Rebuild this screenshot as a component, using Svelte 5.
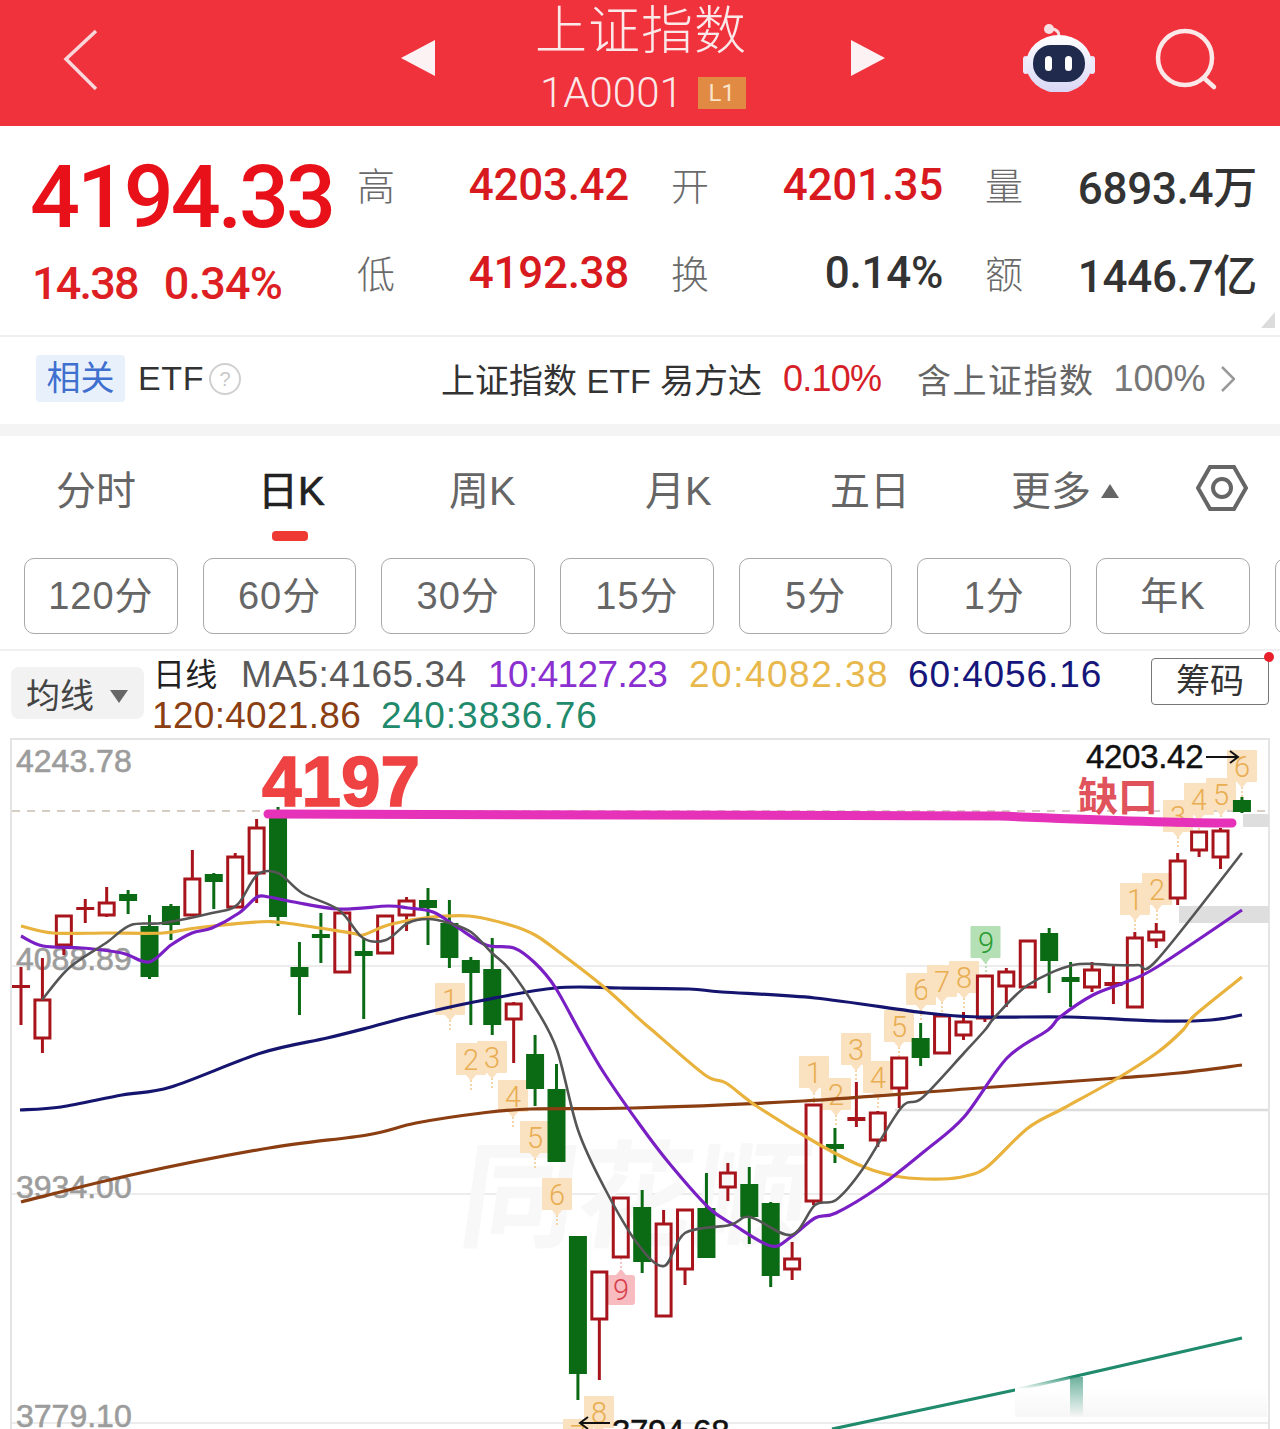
<script>
  const step = 21.42;
  const cx = (i) => 21 + step * i;

  // [up, wickTop, bodyTop, bodyBottom, wickBottom]
  const candles = [
    [1, 967, 985, 988, 1025], [1, 958, 1000, 1038, 1053], [1, 916, 916, 945, 955], [1, 899, 907, 910, 923],
    [1, 887, 903, 915, 917], [0, 890, 894, 901, 914], [0, 915, 926, 977, 979], [0, 904, 906, 925, 940],
    [1, 850, 879, 915, 915], [0, 873, 874, 882, 909], [1, 853, 857, 907, 907], [1, 819, 828, 873, 903],
    [0, 807, 815, 917, 926], [0, 942, 967, 977, 1015], [0, 913, 934, 938, 963], [1, 913, 913, 972, 972],
    [0, 938, 951, 956, 1019], [1, 916, 916, 953, 953], [1, 897, 901, 915, 931], [0, 888, 900, 908, 945],
    [0, 900, 923, 958, 968], [0, 957, 960, 973, 1025], [0, 938, 969, 1025, 1035], [1, 1002, 1004, 1019, 1063],
    [0, 1035, 1054, 1089, 1106], [0, 1064, 1089, 1162, 1162], [0, 1236, 1236, 1374, 1400], [1, 1272, 1272, 1319, 1380],
    [1, 1198, 1198, 1257, 1257], [0, 1190, 1207, 1262, 1273], [1, 1210, 1224, 1316, 1316], [1, 1210, 1210, 1269, 1285],
    [0, 1173, 1208, 1258, 1258], [1, 1163, 1173, 1187, 1201], [0, 1167, 1184, 1217, 1244], [0, 1202, 1203, 1276, 1287],
    [1, 1242, 1259, 1269, 1280], [1, 1105, 1105, 1201, 1205], [0, 1128, 1144, 1149, 1163], [1, 1082, 1117, 1121, 1127],
    [1, 1111, 1113, 1140, 1147], [1, 1058, 1058, 1088, 1108], [0, 1023, 1038, 1058, 1066], [1, 1016, 1016, 1053, 1053],
    [1, 1012, 1022, 1035, 1040], [1, 976, 976, 1018, 1022], [1, 968, 972, 986, 1007], [1, 941, 941, 987, 987],
    [0, 928, 933, 961, 993], [0, 962, 977, 982, 1007], [1, 962, 970, 987, 992], [1, 965, 982, 986, 1004],
    [1, 932, 938, 1007, 1007], [1, 923, 932, 940, 948], [1, 853, 861, 898, 905], [1, 832, 832, 850, 857],
    [1, 828, 831, 857, 869], [0, 797, 800, 812, 813]
  ];

  const ma5 = '42,1000 69,968 106,943 131,925 163,923 212,913 237,905 257,875 278,873 302,893 339,910 363,938 386,940 408,923 428,919 449,923 471,932 492,953 510,970 535,1007 557,1050 578,1130 604,1187 637,1243 664,1266 685,1233 730,1225 750,1217 791,1235 815,1205 836,1200 862,1170 901,1108 922,1098 964,1053 985,1030 995,1017 1028,985 1073,965 1113,965 1138,965 1157,960 1242,853';
  const ma10 = '21,936 43,946 82,948 122,953 149,962 171,945 192,933 212,928 239,913 257,897 269,897 294,902 339,909 388,906 408,908 433,912 457,927 486,945 514,948 535,963 555,987 580,1032 604,1073 640,1125 669,1163 709,1208 734,1225 771,1246 791,1237 815,1218 836,1213 879,1187 926,1150 964,1117 1007,1058 1048,1030 1060,1017 1093,995 1126,982 1157,967 1242,910';
  const ma20 = '21,926 53,933 106,933 163,933 196,928 257,922 286,923 351,933 363,935 388,925 424,918 469,916 510,925 535,935 559,952 604,987 637,1017 652,1030 705,1075 726,1083 758,1107 820,1145 864,1167 901,1177 942,1179 966,1176 987,1167 1028,1128 1064,1108 1118,1078 1158,1052 1183,1030 1195,1015 1242,977';
  const ma60 = '20,1110 61,1107 122,1095 171,1087 261,1053 327,1038 367,1028 408,1017 469,1003 555,988 620,988 689,989 722,992 815,998 926,1013 979,1017 1069,1017 1158,1021 1211,1020 1242,1015';
  const ma120 = '21,1202 131,1175 269,1148 367,1135 416,1123 482,1113 531,1109 633,1108 803,1101 966,1089 1118,1078 1179,1073 1242,1065';
  const ma240 = '832,1429 1015,1390 1242,1338';

  // catmull-rom through the sampled points, the chart's lines are not polygonal
  function smooth(str) {
    const p = str.split(' ').map((s) => s.split(',').map(Number));
    let d = `M${p[0][0]} ${p[0][1]}`;
    for (let i = 0; i < p.length - 1; i++) {
      const a = p[i - 1] || p[i];
      const b = p[i];
      const c = p[i + 1];
      const e = p[i + 2] || c;
      const k = 0.16;
      d += ` C${b[0] + (c[0] - a[0]) * k} ${b[1] + (c[1] - a[1]) * k} ${c[0] - (e[0] - b[0]) * k} ${c[1] - (e[1] - b[1]) * k} ${c[0]} ${c[1]}`;
    }
    return d;
  }

  const tags = [
    [450, 1000, '1'], [471, 1060, '2'], [492, 1058, '3'], [513, 1097, '4'], [535, 1138, '5'], [557, 1195, '6'],
    [578, 1436, '7'], [599, 1413, '8'], [814, 1073, '1'], [836, 1095, '2'], [856, 1050, '3'], [878, 1078, '4'],
    [899, 1027, '5'], [921, 990, '6'], [942, 982, '7'], [964, 978, '8'], [1135, 900, '1'], [1157, 890, '2'],
    [1178, 817, '3'], [1199, 800, '4'], [1221, 795, '5'], [1242, 767, '6']
  ];

  const tagPath = (x, y) =>
    `M${x - 14} ${y - 17} H${x + 14} Q${x + 15} ${y - 17} ${x + 15} ${y - 16} V${y + 14} Q${x + 15} ${y + 15} ${x + 14} ${y + 15} H${x + 5} L${x} ${y + 21} L${x - 5} ${y + 15} H${x - 14} Q${x - 15} ${y + 15} ${x - 15} ${y + 14} V${y - 16} Q${x - 15} ${y - 17} ${x - 14} ${y - 17} Z`;

  const grid = [966, 1194, 1423];
  const axis = [[772, '4243.78'], [970, '4088.89'], [1198, '3934.00'], [1427, '3779.10']];
  const periods = ['120分', '60分', '30分', '15分', '5分', '1分', '年K', ''];
  const tabs = ['分时', '日K', '周K', '月K', '五日'];
</script>

<div class="page">
  <header class="top">
    <svg class="back" width="40" height="64" viewBox="0 0 40 64"><path d="M34 3 L4 31 L34 61" /></svg>
    <div class="switch">
      <svg width="36" height="38" viewBox="0 0 36 38"><polygon points="1,19 35,1 35,37" /></svg>
      <div class="title">
        <div class="name">上证指数</div>
        <div class="code"><span>1A0001</span><b>L1</b></div>
      </div>
      <svg width="36" height="38" viewBox="0 0 36 38"><polygon points="35,19 1,1 1,37" /></svg>
    </div>
    <svg class="robot" width="76" height="70" viewBox="0 0 76 70">
      <defs>
        <linearGradient id="shell" x1="0" y1="0" x2="0" y2="1">
          <stop offset="0" stop-color="#ffffff" />
          <stop offset="1" stop-color="#d9d6f5" />
        </linearGradient>
      </defs>
      <path d="M38 14 C38 8 34 7 30 7" fill="none" stroke="#f6dfe2" stroke-width="3" />
      <circle cx="28" cy="7" r="5" fill="#f6dfe2" />
      <rect x="2" y="34" width="6" height="18" rx="3" fill="#ece8fa" />
      <rect x="68" y="34" width="6" height="18" rx="3" fill="#ece8fa" />
      <ellipse cx="38" cy="42" rx="33" ry="29" fill="url(#shell)" />
      <rect x="12" y="23" width="52" height="37" rx="18" fill="#1f2a4d" />
      <rect x="24" y="34" width="7" height="15" rx="3.5" fill="#fff" />
      <rect x="44" y="34" width="7" height="15" rx="3.5" fill="#fff" />
    </svg>
    <svg class="search" width="70" height="70" viewBox="0 0 70 70">
      <circle cx="31" cy="31" r="27" />
      <path d="M50 51 L60 60" />
    </svg>
  </header>

  <section class="quote">
    <div class="price">
      <div class="now">4194.33</div>
      <div class="chg"><span>14.38</span><span>0.34%</span></div>
    </div>
    <div class="stats">
      <div class="cell"><i>高</i><em class="red">4203.42</em></div>
      <div class="cell"><i>开</i><em class="red">4201.35</em></div>
      <div class="cell"><i>量</i><em>6893.4万</em></div>
      <div class="cell"><i>低</i><em class="red">4192.38</em></div>
      <div class="cell"><i>换</i><em>0.14%</em></div>
      <div class="cell"><i>额</i><em>1446.7亿</em></div>
    </div>
    <div class="corner"></div>
  </section>

  <section class="etf">
    <span class="chip">相关</span>
    <span class="etf-label">ETF</span>
    <span class="help">?</span>
    <span class="etf-name">上证指数 ETF 易方达</span>
    <span class="etf-rate">0.10%</span>
    <span class="etf-hold">含上证指数</span>
    <span class="etf-pct">100%</span>
    <svg width="14" height="26" viewBox="0 0 14 26"><path d="M1 1 L13 13 L1 25" fill="none" stroke="#999" stroke-width="2.5" /></svg>
  </section>

  <div class="band"></div>

  <nav class="tabs">
    {#each tabs as tab, i}
      <div class="tab" class:active={i === 1}>{tab}</div>
    {/each}
    <div class="tab">更多<span class="up"></span></div>
    <svg width="52" height="46" viewBox="0 0 52 46" class="gear">
      <polygon points="2,23 14,2 38,2 50,23 38,44 14,44" />
      <circle cx="26" cy="23" r="9" />
    </svg>
  </nav>

  <div class="periods">
    {#each periods as p}
      <div class="period">{p}</div>
    {/each}
  </div>

  <div class="legend">
    <div class="ma-btn">均线<span class="down"></span></div>
    <div class="ma-text">
      <div class="line">
        <span class="day">日线</span>
        <span class="m5">MA5:4165.34</span>
        <span class="m10">10:4127.23</span>
        <span class="m20">20:4082.38</span>
        <span class="m60">60:4056.16</span>
      </div>
      <div class="line second">
        <span class="m120">120:4021.86</span>
        <span class="m240">240:3836.76</span>
      </div>
    </div>
    <div class="chip-btn">筹码<span class="dot"></span></div>
  </div>

  <svg class="chart" width="1280" height="691" viewBox="0 738 1280 691">
    <defs>
      <linearGradient id="fade" x1="0" y1="0" x2="0" y2="1">
        <stop offset="0" stop-color="#fff" stop-opacity="0.1" />
        <stop offset="0.3" stop-color="#fff" />
        <stop offset="1" stop-color="#f6f6f6" />
      </linearGradient>
      <linearGradient id="smear" x1="0" y1="0" x2="0" y2="1">
        <stop offset="0" stop-color="#2e8f72" stop-opacity="0.7" />
        <stop offset="1" stop-color="#2e8f72" stop-opacity="0" />
      </linearGradient>
    </defs>

    <rect x="11" y="739" width="1258" height="700" fill="none" stroke="#e4e4e4" stroke-width="2" />
    {#each grid as y}
      <line x1="12" x2="1268" y1={y} y2={y} stroke="#ececec" stroke-width="2" />
    {/each}
    <line x1="895" x2="1268" y1="1110" y2="1110" stroke="#dcdcdc" stroke-width="2.5" />
    <line x1="12" x2="1268" y1="811" y2="811" stroke="#c9bfb2" stroke-width="1.5" stroke-dasharray="8 7" />

    <rect x="1243" y="814" width="26" height="13" fill="#dedede" />
    <rect x="1179" y="906" width="90" height="17" fill="#dedede" />

    <text x="462" y="1238" class="mark" transform="skewX(-8)" transform-origin="630 1195">同花顺</text>

    {#each axis as [y, t]}
      <text x="16" {y} class="axis">{t}</text>
    {/each}

    {#each tags as [x, y, n]}
      <line x1={x} x2={x} y1={y + 20} y2={y + 32} stroke="#f2c78c" stroke-width="1.5" stroke-dasharray="2 2" />
      <path d={tagPath(x, y)} fill="#fae1bf" />
      <text {x} y={y + 10} class="tag">{n}</text>
    {/each}
    <line x1="986" x2="986" y1="962" y2="976" stroke="#a5d8a5" stroke-width="1.5" stroke-dasharray="2 2" />
    <path d={tagPath(985.5, 943)} fill="#b5e0b5" />
    <text x="986" y="953" class="tag green">9</text>
    <line x1="621" x2="621" y1="1258" y2="1272" stroke="#f3aeb2" stroke-width="1.5" stroke-dasharray="2 2" />
    <rect x="607" y="1275" width="28" height="30" rx="3" fill="#f8bcc0" />
    <polygon points="616,1275 621,1269 626,1275" fill="#f8bcc0" />
    <text x="621" y="1300" class="tag pink">9</text>

    {#each candles as [up, wt, bt, bb, wb], i}
      {#if up}
        <line x1={cx(i)} x2={cx(i)} y1={wt} y2={bt} stroke="#a8141b" stroke-width="3" />
        <line x1={cx(i)} x2={cx(i)} y1={bb} y2={wb} stroke="#a8141b" stroke-width="3" />
        {#if bb - bt < 6}
          <rect x={cx(i) - 9} y={bt} width="18" height={bb - bt} fill="#a8141b" />
        {:else}
          <rect x={cx(i) - 7.5} y={bt} width="15" height={bb - bt} fill="none" stroke="#a8141b" stroke-width="3" />
        {/if}
      {:else}
        <line x1={cx(i)} x2={cx(i)} y1={wt} y2={wb} stroke="#0b6a14" stroke-width="3" />
        <rect x={cx(i) - 9} y={bt} width="18" height={bb - bt} fill="#0b6a14" />
      {/if}
    {/each}

    <polyline points={ma240} class="ma" stroke="#1f8a6c" />
    <path d={smooth(ma120)} class="ma" stroke="#8a3e12" />
    <path d={smooth(ma60)} class="ma" stroke="#15156f" />
    <path d={smooth(ma20)} class="ma" stroke="#e8b23c" />
    <path d={smooth(ma10)} class="ma" stroke="#7a1fc4" />
    <path d={smooth(ma5)} class="ma thin" stroke="#555" />

    <rect x="1015" y="1377" width="252" height="40" fill="url(#fade)" />
    <rect x="1070" y="1377" width="13" height="40" fill="url(#smear)" />

    <path d="M268 814 C600 814 900 814 1000 816 C1100 820 1160 823 1232 823" fill="none" stroke="#e632b8" stroke-width="9" stroke-linecap="round" />

    <text x="262" y="806" class="big-mark">4197</text>
    <text x="1078" y="811" class="gap-mark">缺口</text>
    <text x="1086" y="768" class="hi">4203.42</text>
    <path d="M1206 757 H1238 M1230 751 L1238 757 L1230 763" fill="none" stroke="#111" stroke-width="2" />
    <path d="M580 1423 H610 M588 1417 L580 1423 L588 1429" fill="none" stroke="#111" stroke-width="2" />
    <text x="612" y="1443" class="hi">3794.68</text>
  </svg>
</div>

<style>
  :global(body) {
    margin: 0;
    background: #fff;
  }

  .page {
    width: 1280px;
    height: 1429px;
    overflow: hidden;
    background: #fff;
    font-family: "Liberation Sans", "Noto Sans CJK SC", sans-serif;
  }

  .top {
    height: 126px;
    background: #f0323d;
    display: flex;
    align-items: center;
    color: #fbe9ea;
    box-sizing: border-box;
  }

  .back {
    margin-left: 62px;
    margin-top: -6px;
  }
  .back path {
    fill: none;
    stroke: #f8d6d9;
    stroke-width: 3.5;
  }

  .switch {
    margin-left: 298px;
    width: 486px;
    display: flex;
    justify-content: space-between;
    align-items: center;
  }
  .switch svg {
    margin-top: -10px;
    fill: #fdf2f3;
  }

  .title {
    text-align: center;
    height: 126px;
    margin-left: -4px;
  }
  .name {
    font-size: 52px;
    line-height: 54px;
    letter-spacing: 1px;
    font-weight: 300;
    font-family: "Noto Sans CJK SC", sans-serif;
  }
  .code {
    display: flex;
    align-items: center;
    gap: 15px;
    margin-top: 22px;
    margin-left: 5px;
    font-family: Roboto, "Liberation Sans", sans-serif;
    font-weight: 300;
    font-size: 42px;
    line-height: 34px;
  }
  .code b {
    width: 48px;
    height: 32px;
    line-height: 32px;
    background: #e08a44;
    color: #fbe3c8;
    font-size: 24px;
    font-weight: 400;
  }

  .robot {
    margin-left: 135px;
    margin-top: -12px;
  }
  .search {
    margin-left: 57px;
    margin-top: -2px;
  }
  .search circle,
  .search path {
    fill: none;
    stroke: #fbe8e8;
    stroke-width: 4.5;
    stroke-linecap: round;
  }

  .quote {
    height: 209px;
    border-bottom: 2px solid #eee;
    display: flex;
    position: relative;
    box-sizing: content-box;
  }
  .price {
    width: 327px;
    padding-left: 30px;
    padding-top: 27px;
    box-sizing: content-box;
    color: #e8111a;
  }
  .now {
    font-size: 88px;
    line-height: 88px;
    font-weight: 500;
    letter-spacing: -3.1px;
    font-family: Roboto, "Liberation Sans", sans-serif;
  }
  .chg {
    display: flex;
    gap: 26px;
    margin-top: 18px;
    margin-left: 2px;
    font-size: 45px;
    line-height: 50px;
    font-weight: 500;
    letter-spacing: -1.8px;
    font-family: Roboto, "Liberation Sans", sans-serif;
    color: #dd1f24;
  }
  .chg span:last-child {
    letter-spacing: -0.8px;
  }

  .stats {
    display: grid;
    grid-template-columns: repeat(3, 272px);
    grid-auto-rows: 88px;
    column-gap: 42px;
    margin-top: 13px;
  }
  .cell {
    display: flex;
    justify-content: space-between;
    align-items: center;
  }
  .cell i {
    font-style: normal;
    font-size: 38px;
    color: #6a6a6a;
    font-weight: 300;
  }
  .cell em {
    font-style: normal;
    font-size: 44px;
    font-weight: 500;
    letter-spacing: -0.3px;
    padding-top: 4px;
    color: #333;
    font-family: Roboto, "Noto Sans CJK SC", sans-serif;
  }
  .cell em.red {
    color: #d81a20;
  }

  .corner {
    position: absolute;
    right: 5px;
    bottom: 7px;
    width: 0;
    height: 0;
    border-left: 14px solid transparent;
    border-bottom: 16px solid #dcdcdc;
  }

  .etf {
    height: 87px;
    display: flex;
    align-items: center;
    padding-left: 36px;
    padding-bottom: 4px;
    font-size: 34px;
    color: #333;
    box-sizing: border-box;
  }
  .chip {
    width: 89px;
    height: 47px;
    line-height: 47px;
    text-align: center;
    background: #e8f0fb;
    color: #3f6fcf;
    border-radius: 4px;
  }
  .etf-label {
    margin-left: 13px;
    letter-spacing: 0.6px;
  }
  .help {
    margin-left: 5px;
    width: 28px;
    height: 28px;
    line-height: 28px;
    border: 2.5px solid #d0d0d0;
    border-radius: 50%;
    text-align: center;
    color: #c8c8c8;
    font-size: 20px;
  }
  .etf-name {
    margin-left: 200px;
    width: 320px;
    white-space: nowrap;
  }
  .etf-rate {
    margin-left: 22px;
    width: 98px;
    color: #d62027;
    font-size: 36px;
    letter-spacing: -0.8px;
    white-space: nowrap;
  }
  .etf-hold {
    margin-left: 36px;
    color: #666;
    white-space: nowrap;
    letter-spacing: 1.5px;
  }
  .etf-pct {
    margin-left: 19px;
    color: #777;
    width: 107px;
    font-size: 36px;
    white-space: nowrap;
  }

  .band {
    height: 12px;
    background: #f4f4f4;
  }

  .tabs {
    height: 122px;
    display: grid;
    grid-template-columns: 202px 191px 196px 185px 181px 185px auto;
    padding-left: 56px;
    padding-bottom: 18px;
    box-sizing: border-box;
    align-items: center;
    font-size: 40px;
    color: #666;
  }
  .tab {
    position: relative;
    white-space: nowrap;
  }
  .tab.active {
    color: #222;
    -webkit-text-stroke: 0.7px #222;
  }
  .tab.active::after {
    content: '';
    position: absolute;
    left: 14px;
    top: 72px;
    width: 36px;
    height: 10px;
    border-radius: 4px;
    background: #ee3a32;
  }
  .up {
    display: inline-block;
    margin-left: 10px;
    vertical-align: 7px;
    border-left: 9px solid transparent;
    border-right: 9px solid transparent;
    border-bottom: 14px solid #666;
  }
  .gear polygon,
  .gear circle {
    fill: none;
    stroke: #666;
    stroke-width: 4;
  }

  .periods {
    display: flex;
    gap: 25px;
    padding-left: 24px;
    height: 93px;
    box-sizing: border-box;
    border-bottom: 2px solid #f0f0f0;
    width: 1400px;
  }
  .period {
    width: 153.7px;
    height: 76px;
    flex: none;
    box-sizing: border-box;
    border: 1.5px solid #a8a8a8;
    border-radius: 10px;
    text-align: center;
    line-height: 74px;
    font-size: 38px;
    letter-spacing: 1px;
    color: #666;
  }

  .legend {
    height: 87px;
    display: flex;
    position: relative;
    box-sizing: border-box;
    padding-left: 11px;
    padding-top: 16px;
  }
  .ma-btn {
    width: 133px;
    height: 52px;
    line-height: 58px;
    background: #f2f2f2;
    border-radius: 8px;
    box-sizing: border-box;
    padding-left: 15px;
    font-size: 34px;
    color: #444;
    flex: none;
  }
  .down {
    display: inline-block;
    margin-left: 16px;
    vertical-align: 5px;
    border-left: 9px solid transparent;
    border-right: 9px solid transparent;
    border-top: 13px solid #666;
  }
  .ma-text {
    margin-left: 9px;
    margin-top: -16px;
    white-space: nowrap;
    font-size: 37px;
  }
  .line {
    display: flex;
    height: 41px;
    line-height: 48px;
    letter-spacing: 0.2px;
  }
  .line.second {
    margin-left: -1px;
    gap: 20px;
    letter-spacing: 0.3px;
  }
  .day {
    color: #222;
    font-size: 32px;
    width: 88px;
  }
  .m5 {
    color: #5a5a5a;
    width: 247px;
    letter-spacing: 0.5px;
  }
  .m10 {
    color: #8a2fd0;
    width: 201px;
    letter-spacing: -0.6px;
  }
  .m20 {
    color: #e8b84c;
    width: 219px;
    letter-spacing: 1.5px;
  }
  .m60 {
    color: #16167a;
    letter-spacing: 0.9px;
  }
  .m120 {
    color: #8a3e12;
  }
  .m240 {
    color: #1f8a6c;
    letter-spacing: 1px;
  }
  .chip-btn {
    position: absolute;
    left: 1151px;
    top: 7px;
    width: 118px;
    height: 47px;
    box-sizing: border-box;
    border: 1.5px solid #777;
    border-radius: 4px;
    text-align: center;
    line-height: 44px;
    font-size: 34px;
    color: #333;
  }
  .dot {
    position: absolute;
    right: -6px;
    top: -7px;
    width: 10px;
    height: 10px;
    border-radius: 50%;
    background: #e8202a;
  }

  .chart {
    display: block;
  }
  .ma {
    fill: none;
    stroke-width: 3.2;
    stroke-linejoin: round;
  }
  .thin {
    stroke-width: 2.6;
  }
  .axis {
    font-size: 32px;
    fill: #9c9c9c;
    stroke: #9c9c9c;
    stroke-width: 0.6;
    font-family: "Liberation Sans", sans-serif;
  }
  .tag {
    font-size: 29px;
    font-weight: 300;
    fill: #e9ad52;
    text-anchor: middle;
    font-family: Roboto, sans-serif;
  }
  .tag.green {
    fill: #2a9c34;
  }
  .tag.pink {
    fill: #d8404c;
  }
  .mark {
    font-size: 116px;
    font-weight: 700;
    fill: #f8f8f8;
    font-family: "Noto Sans CJK SC", sans-serif;
  }
  .big-mark {
    font-size: 71px;
    font-weight: 700;
    fill: #ef4242;
    stroke: #ef4242;
    stroke-width: 1.5;
    font-family: "Liberation Sans", sans-serif;
  }
  .gap-mark {
    font-size: 40px;
    font-weight: 700;
    fill: #e0535c;
    font-family: "Noto Sans CJK SC", sans-serif;
  }
  .hi {
    font-size: 33px;
    letter-spacing: -0.3px;
    fill: #111;
    stroke: #111;
    stroke-width: 0.5;
    font-family: "Liberation Sans", sans-serif;
  }
</style>
